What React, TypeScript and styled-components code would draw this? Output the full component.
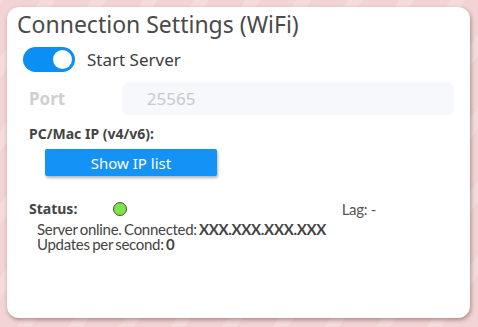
import React from 'react';
import styled, { createGlobalStyle } from 'styled-components';

const GlobalStyle = createGlobalStyle`
  html, body {
    margin: 0;
    padding: 0;
    width: 478px;
    height: 327px;
    overflow: hidden;
  }
  body {
    font-family: 'Noto Sans', sans-serif;
    background-color: #f2d4d4;
    background-image: repeating-linear-gradient(
      -55deg,
      #f2d4d4 0px,
      #f2d4d4 30px,
      #f5dcdc 30px,
      #f5dcdc 42px
    );
  }
`;

const Page = styled.div`
  padding: 7px 8px 9px 7px;
  box-sizing: border-box;
  height: 327px;
`;

const Card = styled.div`
  background: #fff;
  border-radius: 12px;
  box-shadow: 1px 2px 4px rgba(90, 40, 40, 0.45);
  height: 100%;
  box-sizing: border-box;
  padding: 2px 16px 0 10px;
  display: flex;
  flex-direction: column;
`;

const Title = styled.h1`
  margin: 0;
  font-family: 'Noto Sans', sans-serif;
  font-weight: 400;
  font-size: 23px;
  line-height: 31px;
  color: #4a4a4a;
`;

const ToggleRow = styled.label`
  display: flex;
  align-items: center;
  gap: 12px;
  margin: 7px 0 0 6px;
  font-size: 17px;
  color: #3c3c3c;
`;

const Switch = styled.span<{ $on: boolean }>`
  position: relative;
  width: 52px;
  height: 25px;
  border-radius: 13px;
  background: ${(p) => (p.$on ? '#0b8ff5' : '#ccc')};
  &::after {
    content: '';
    position: absolute;
    top: 3px;
    left: ${(p) => (p.$on ? '30px' : '3px')};
    width: 19px;
    height: 19px;
    border-radius: 50%;
    background: #fff;
  }
`;

const FieldRow = styled.div`
  display: flex;
  align-items: center;
  margin: 10px 0 0 12px;
`;

const FieldLabel = styled.span<{ $disabled?: boolean }>`
  width: 93px;
  font-weight: 700;
  font-size: 17px;
  color: ${(p) => (p.$disabled ? '#cfcfcf' : '#444')};
`;

const Input = styled.input`
  width: 333px;
  height: 33px;
  box-sizing: border-box;
  border: none;
  border-radius: 7px;
  background: #f7f8fc;
  padding: 0 25px;
  font-family: 'Noto Sans', sans-serif;
  font-size: 17px;
  color: #c9c9c9;
  outline: none;
`;

const Label = styled.div`
  margin: 9px 0 0 12px;
  font-weight: 700;
  font-size: 14px;
  color: #444;
`;

const BlueButton = styled.button`
  margin: 6px 0 0 28px;
  width: 172px;
  height: 27px;
  border: none;
  border-radius: 2px;
  background: #1592f5;
  box-shadow: 1px 2px 3px rgba(0, 0, 0, 0.3);
  color: #fff;
  font-family: 'Noto Sans', sans-serif;
  font-size: 15px;
  padding: 0;
`;

const StatusRow = styled.div`
  display: grid;
  grid-template-columns: 84px 1fr auto;
  align-items: center;
  margin: 23px 0 0 12px;
  padding-right: 78px;
`;

const StatusLabel = styled.span`
  font-weight: 700;
  font-size: 14px;
  color: #444;
`;

const Dot = styled.span<{ $color: string }>`
  width: 14px;
  height: 14px;
  border-radius: 50%;
  background: ${(p) => p.$color};
  border: 1px solid #3d5a30;
  box-sizing: border-box;
`;

const Lag = styled.span`
  font-family: Lato, sans-serif;
  font-size: 15px;
  letter-spacing: -0.3px;
  color: #555;
`;

const Info = styled.div`
  margin: 4px 0 0 20px;
  font-family: Lato, sans-serif;
  font-size: 15px;
  line-height: 15px;
  letter-spacing: -0.3px;
  word-spacing: -1px;
  color: #444;
  b {
    font-weight: 700;
  }
`;

export default function App() {
  return (
    <>
      <GlobalStyle />
      <Page>
        <Card>
          <Title>Connection Settings (WiFi)</Title>
          <ToggleRow>
            <Switch $on />
            Start Server
          </ToggleRow>
          <FieldRow>
            <FieldLabel $disabled>Port</FieldLabel>
            <Input value="25565" readOnly />
          </FieldRow>
          <Label>PC/Mac IP (v4/v6):</Label>
          <div>
            <BlueButton>Show IP list</BlueButton>
          </div>
          <StatusRow>
            <StatusLabel>Status:</StatusLabel>
            <Dot $color="#7fe24c" />
            <Lag>Lag: -</Lag>
          </StatusRow>
          <Info>
            Server online. Connected:<b> XXX.XXX.XXX.XXX</b>
            <br />
            Updates per second:<b> 0</b>
          </Info>
        </Card>
      </Page>
    </>
  );
}
